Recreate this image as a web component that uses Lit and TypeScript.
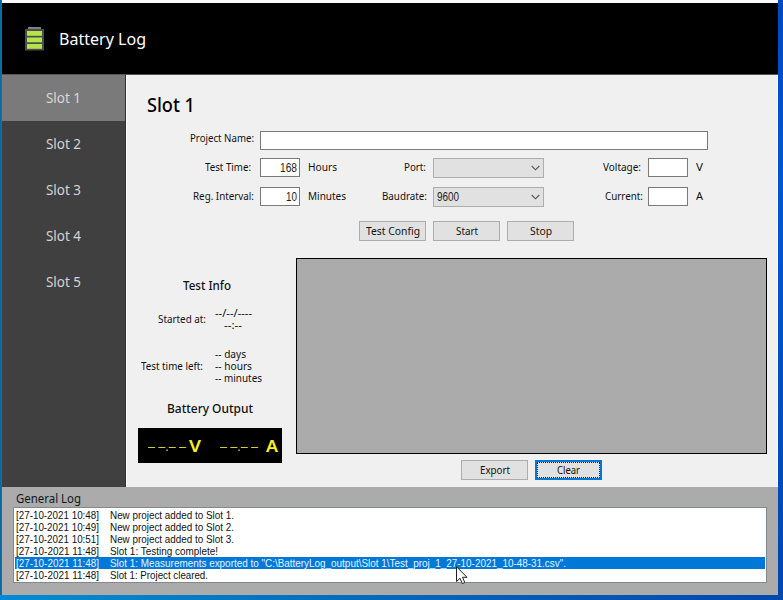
import { LitElement, html, css, svg } from "lit";
import { customElement, property, query } from "lit/decorators.js";

/** A single line of text condensed or widened to occupy an exact width. */
@customElement("fit-text")
class FitText extends LitElement {
  @property({ type: Number }) w = 50;
  @property() text = "";
  @query("span") private span!: HTMLSpanElement;

  static styles = css`
    :host { display: block; white-space: pre; flex: none; }
    span { display: inline-block; transform-origin: 0 50%; }
  `;

  updated() {
    this.style.width = `${this.w}px`;
    this.span.style.transform = "none";
    const natural = this.span.getBoundingClientRect().width;
    if (natural) this.span.style.transform = `scaleX(${this.w / natural})`;
  }

  render() {
    return html`<span>${this.text}</span>`;
  }
}

const t = (text: string, w: number, cls = "") =>
  html`<fit-text class=${cls} .text=${text} .w=${w}></fit-text>`;

const chevron = svg`<path d="M0.7 1 L4.5 4.8 L8.3 1" fill="none" stroke="#555" stroke-width="1.1"/>`;

const slots = [1, 2, 3, 4, 5];

const log: [string, string, number][] = [
  ["[27-10-2021 10:48]", "New project added to Slot 1.", 124],
  ["[27-10-2021 10:49]", "New project added to Slot 2.", 124],
  ["[27-10-2021 10:51]", "New project added to Slot 3.", 124],
  ["[27-10-2021 11:48]", "Slot 1: Testing complete!", 108],
  [
    "[27-10-2021 11:48]",
    'Slot 1: Measurements exported to "C:\\BatteryLog_output\\Slot 1\\Test_proj_1_27-10-2021_10-48-31.csv".',
    456,
  ],
  ["[27-10-2021 11:48]", "Slot 1: Project cleared.", 98],
];

@customElement("app-root")
class AppRoot extends LitElement {
  static styles = css`
    * { box-sizing: border-box; }
    :host {
      box-sizing: border-box;
      display: block; position: relative; width: 783px; height: 600px; overflow: hidden;
      padding: 0 5px 5px 1px;
      background:
        linear-gradient(90deg, #0588d6, #0588c8 8%, #0560b8 60%, #0048ae) 0 595px / 783px 5px no-repeat,
        linear-gradient(#0048c4, #0054d8 30%, #0050cc 55%, #0046b0) 778px 0 / 5px 600px no-repeat,
        #0a6aa6;
      font-family: "Noto Sans", "Open Sans", sans-serif;
      font-size: 10.5px; line-height: 14px; color: #111;
    }
    .window {
      height: 595px; display: grid; grid-template-rows: 3px 72px 412px 108px;
      border-left: 1px solid #4c5d68; border-bottom: 1px solid #555;
      background: #f0f0f0;
    }
    .top { background: #fafafa; }
    header {
      background: #000; display: flex; align-items: center; gap: 15px; padding: 1px 0 0 23px;
      color: #fff; font-size: 17px; line-height: 24px; border-bottom: 1px solid #555;
    }
    header svg { display: block; }
    .body { display: grid; grid-template-columns: 124px 1fr; min-height: 0; }
    nav { background: #404040; border-right: 1px solid #303030; }
    .slot {
      height: 46px; display: flex; justify-content: center; align-items: center;
      color: #d4d4d4; font-size: 14px; line-height: 20px;
    }
    .slot.active { background: #7a7a7a; color: #d8d8d8; }
    main { border-left: 1px solid #fff; border-right: 1px solid #fbfbfb; }
    .title { font-size: 19px; line-height: 26px; font-weight: 500; color: #000; margin: 17px 0 0 20px; }
    .row { display: flex; align-items: flex-start; height: 20px; }
    .row > div:not(.box):not(.combo) { padding-top: 2px; }
    .row.name { margin-top: 13px; }
    .row.name > .cap1:not(.box) { padding-top: 0; }
    .row.time { margin-top: 7px; }
    .row.reg { margin-top: 9px; }
    .cap1 { display: flex; width: 127px; justify-content: flex-end; margin-right: 6px; flex: none; }
    .cap1.short { width: 124px; margin-right: 9px; }
    .box { height: 19px; border: 1px solid #7a7a7a; background: #fff; display: flex;
      justify-content: flex-end; align-items: center; padding-right: 2px; flex: none; }
    .name .box { width: 448px; }
    .small { width: 40px; }
    .num { font-family: "Liberation Sans", sans-serif; font-size: 12px; line-height: 14px; color: #222; }
    .unit { display: flex; width: 38px; margin-left: 8px; flex: none; }
    .cap2 { display: flex; justify-content: flex-end; width: 81px; flex: none; margin-right: 6px; }
    .cap2.short { width: 80px; margin-right: 7px; }
    .combo { width: 111px; height: 20px; border: 1px solid #adadad; background: #e1e1e1; display: flex;
      align-items: center; justify-content: space-between; padding: 0 3px; flex: none; }
    .combo svg { margin-left: auto; }
    .cap3 { display: flex; justify-content: flex-end; width: 99px; margin-right: 5px; flex: none; }
    .cap3.short { width: 97px; margin-right: 7px; }
    .buttons { display: flex; gap: 7px; margin: 14px 0 0 232px; }
    .btn { width: 67px; height: 20px; border: 1px solid #adadad; background: #e1e1e1; display: flex;
      align-items: center; justify-content: center; }
    .btn.focus { border: 2px solid #0078d7; outline: 1px dotted #222; outline-offset: -3px; }
    .lower { display: grid; grid-template-columns: 169px 471px; margin-top: 17px; }
    .info { padding-top: 19px; }
    .h { font-size: 12.3px; line-height: 18px; font-weight: 500; }
    .h.test { margin-left: 56px; }
    .h.out { margin: 16px 0 0 40px; }
    .pair { display: flex; align-items: center; line-height: 12px; }
    .pair.start { margin: 12px 0 0 31px; gap: 9px; }
    .pair.left { margin: 17px 0 0 14px; gap: 12px; }
    .stack { display: flex; flex-direction: column; }
    .stack .indent { margin-left: 9px; }
    .lcd { width: 144px; height: 35px; background: #000; color: #fff01e; margin: 10px 0 0 11px;
      display: flex; align-items: center; padding-left: 10px; font-size: 16px; line-height: 20px; }
    .dashes { font-family: "Liberation Sans", sans-serif; font-size: 15px; color: #d8cf28; }
    .lcd .mark { font-weight: 600; }
    .lcd .v { margin: 0 19px 0 3px; }
    .lcd .a { margin-left: 8px; }
    .grid { height: 196px; background: #ababab; border: 1px solid #000; }
    .actions { display: flex; gap: 7px; margin: 6px 0 0 165px; }
    footer { background: #ababab; padding: 3px 11px 0; }
    .gl { font-size: 12px; line-height: 17px; margin-left: 3px; color: #161616; }
    .list { height: 76px; background: #fff; border: 1px solid #828790; padding: 1px; width: 754px; }
    .entry { height: 12px; display: flex; gap: 11px; padding-left: 1px; color: #111;
      font-family: "Liberation Sans", sans-serif; font-size: 11.5px; line-height: 12px; }
    .entry.sel { background: #0078d7; color: #e8f4ff; }
    .cursor { position: absolute; left: 456px; top: 566px; }
  `;

  render() {
    return html`
      <div class="window">
        <div class="top"></div>
        <header>
          <svg width="19" height="24" viewBox="0 0 19 24">
            <rect x="3" y="0" width="13" height="2" fill="#808086" />
            <rect x="0" y="2" width="19" height="21.5" fill="#4b4b50" />
            <rect x="2" y="4" width="15" height="4.8" fill="#b4e34a" />
            <rect x="2" y="10.5" width="15" height="4.8" fill="#b4e34a" />
            <rect x="2" y="17" width="15" height="4.8" fill="#b4e34a" />
          </svg>
          ${t("Battery Log", 87)}
        </header>
        <div class="body">
          <nav>
            ${slots.map((n) => html`<div class="slot ${n === 1 ? "active" : ""}">${t(`Slot ${n}`, 35)}</div>`)}
          </nav>
          <main>
            ${t("Slot 1", 48, "title")}
            <div class="row name">
              <div class="cap1">${t("Project Name:", 64)}</div>
              <div class="box"></div>
            </div>
            <div class="row time">
              <div class="cap1 short">${t("Test Time:", 46)}</div>
              <div class="box small">${t("168", 17, "num")}</div>
              <div class="unit">${t("Hours", 29)}</div>
              <div class="cap2 short">${t("Port:", 22)}</div>
              <div class="combo"><svg width="9" height="6">${chevron}</svg></div>
              <div class="cap3 short">${t("Voltage:", 38)}</div>
              <div class="box small"></div>
              <div class="unit">${t("V", 7)}</div>
            </div>
            <div class="row reg">
              <div class="cap1">${t("Reg. Interval:", 61)}</div>
              <div class="box small">${t("10", 11, "num")}</div>
              <div class="unit">${t("Minutes", 38)}</div>
              <div class="cap2">${t("Baudrate:", 45)}</div>
              <div class="combo">${t("9600", 22, "num")}<svg width="9" height="6">${chevron}</svg></div>
              <div class="cap3">${t("Current:", 38)}</div>
              <div class="box small"></div>
              <div class="unit">${t("A", 7)}</div>
            </div>
            <div class="buttons">
              <div class="btn">${t("Test Config", 54)}</div>
              <div class="btn">${t("Start", 22)}</div>
              <div class="btn">${t("Stop", 22)}</div>
            </div>
            <div class="lower">
              <div class="info">
                ${t("Test Info", 48, "h test")}
                <div class="pair start">
                  ${t("Started at:", 48)}
                  <div class="stack">${t("--/--/----", 37)}${t("--:--", 18, "indent")}</div>
                </div>
                <div class="pair left">
                  ${t("Test time left:", 62)}
                  <div class="stack">${t("-- days", 31)}${t("-- hours", 37)}${t("-- minutes", 47)}</div>
                </div>
                ${t("Battery Output", 86, "h out")}
                <div class="lcd">
                  ${t("– –.– –", 38, "dashes")}${t("V", 12, "mark v")}
                  ${t("– –.– –", 38, "dashes")}${t("A", 12, "mark a")}
                </div>
              </div>
              <div>
                <div class="grid"></div>
                <div class="actions">
                  <div class="btn">${t("Export", 30)}</div>
                  <div class="btn focus">${t("Clear", 23)}</div>
                </div>
              </div>
            </div>
          </main>
        </div>
        <footer>
          ${t("General Log", 65, "gl")}
          <div class="list">
            ${log.map(
              ([time, msg, w], i) =>
                html`<div class="entry ${i === 4 ? "sel" : ""}">${t(time, 83)}${t(msg, w)}</div>`
            )}
          </div>
        </footer>
      </div>
      <svg class="cursor" width="12" height="19" viewBox="0 0 12 19">
        <path d="M0.5 0.7 V15.6 L4 12.3 L6.3 17.6 L8.8 16.5 L6.5 11.3 H11 Z" fill="#fff" stroke="#222" stroke-width="1" />
      </svg>
    `;
  }
}
